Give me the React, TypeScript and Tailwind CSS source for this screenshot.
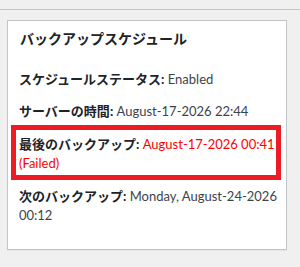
import React from 'react';

const rows = [
  { label: 'スケジュールステータス', value: 'Enabled' },
  { label: 'サーバーの時間', value: 'August-17-2026 22:44' },
  { label: '最後のバックアップ', value: 'August-17-2026 00:41 (Failed)', failed: true },
  { label: '次のバックアップ', value: 'Monday, August-24-2026 00:12' },
];

export default function App() {
  return (
    <div className="min-h-screen bg-[#f0f0f1] text-[13px] leading-[1.5] text-[#3c434a] font-['Lato','Noto_Sans_CJK_JP',sans-serif]">
      {/* header rule */}
      <div className="h-[10px] border-b border-[#c3c4c7]" />

      <div className="pt-[10px] pl-[7px]">
        {/* Schedule box */}
        <div className="w-[280px] h-[230px] bg-white border border-[#c3c4c7] shadow-[0_1px_1px_rgba(0,0,0,0.04)]">
          <h2 className="px-3 py-2 text-[14px] leading-[1.4] font-bold text-[#1d2327]">
            バックアップスケジュール
          </h2>
          <div className="pl-[11px] pr-[8px] pb-3">
            {rows.map(r => (
              <div key={r.label} className="relative mt-[13px]">
                <p className={r.failed ? 'text-[#ff0000]' : ''}>
                  <strong className="font-bold text-[#1d2327]">{r.label}:</strong> {r.value}
                </p>
                {r.failed && (
                  <div className="absolute top-[-10px] bottom-[-6px] left-[-8px] right-[-3px] border-[5px] border-[#ed1c24] pointer-events-none" />
                )}
              </div>
            ))}
          </div>
        </div>
      </div>
    </div>
  );
}
